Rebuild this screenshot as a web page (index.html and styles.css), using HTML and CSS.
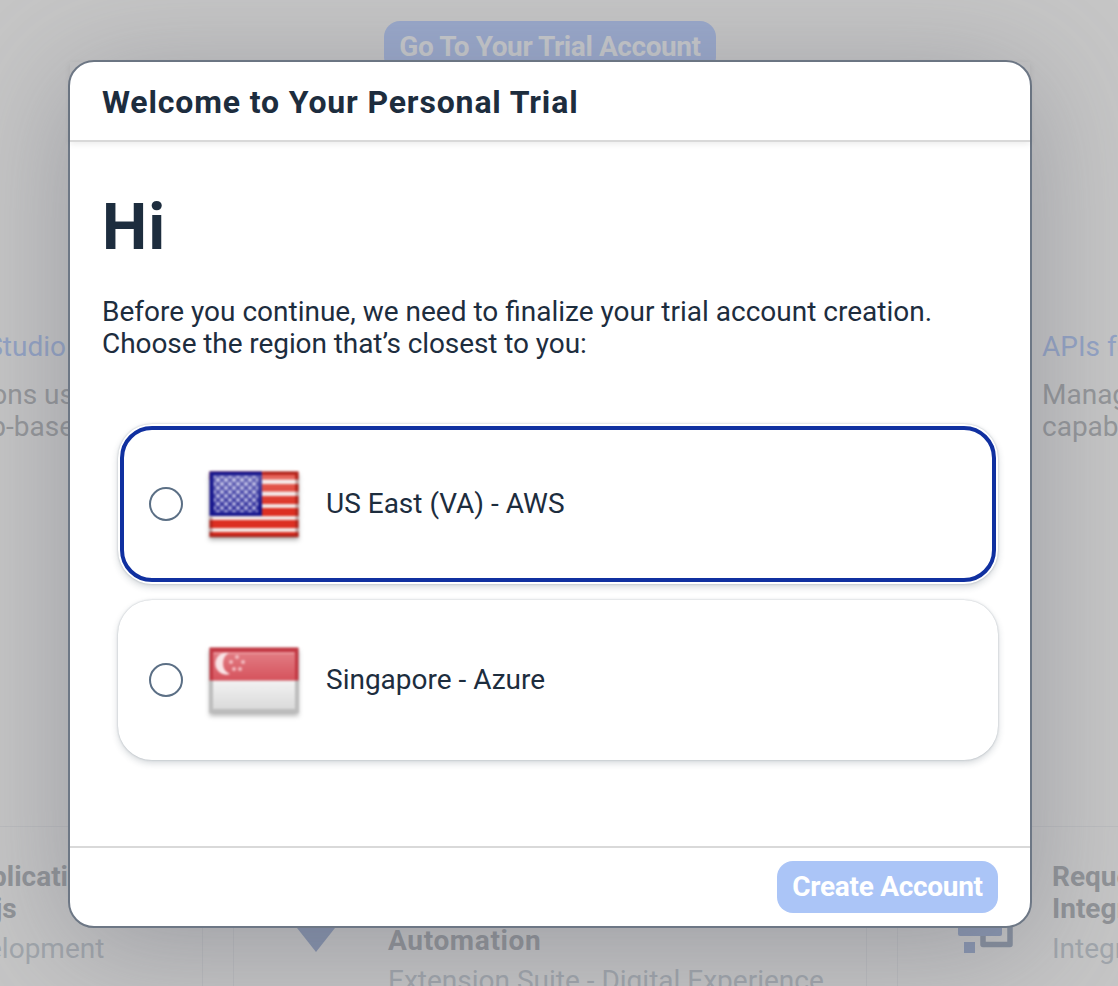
FILE: index.html
```html
<!DOCTYPE html>
<html lang="en">
<head>
<meta charset="utf-8">
<title>Welcome to Your Personal Trial</title>
<link rel="stylesheet" href="styles.css">
</head>
<body>
<main class="page">
  <div class="hero"><div class="hero-button"><span class="hero-label">Go To Your Trial Account</span></div></div>
  <div class="features">
    <section class="feature feature-left">
      <h3 class="feature-title">Studio</h3>
      <p class="feature-text"><span>ons us</span><br><span>b-base</span></p>
    </section>
    <section class="feature">
      <h3 class="feature-title">APIs for</h3>
      <p class="feature-text">Manage<br>capabilities</p>
    </section>
  </div>
  <div class="tiles">
    <article class="tile tile-left">
      <h4 class="tile-title"><span class="tile-app">plication</span><br><span class="tile-js">js</span></h4>
      <p class="tile-sub tile-dev">elopment</p>
    </article>
    <article class="tile tile-middle">
      <svg class="tile-icon" width="60" height="60" viewBox="0 0 60 60"><path d="M0 10H60L30 48Z" fill="#8592ad"/></svg>
      <div><h4 class="tile-title tile-auto">Automation</h4><p class="tile-sub">Extension Suite - Digital Experience</p></div>
    </article>
    <article class="tile tile-right">
      <svg class="tile-icon icon-links" width="56" height="60" viewBox="0 0 56 60"><path d="M25 30V43.500H52V14" fill="none" stroke="#858e9d" stroke-width="5.500" stroke-linejoin="round"/><rect x="0" y="4" width="44" height="31" rx="2" fill="#8996b1"/><rect x="6" y="41" width="11" height="11" fill="#8996b1"/></svg>
      <div><h4 class="tile-title">Request<br>Integration</h4><p class="tile-sub">Integration</p></div>
    </article>
  </div>
</main>

<div class="dialog" role="dialog">
  <header class="dialog-header"><h1 class="dialog-title">Welcome to Your Personal Trial</h1></header>
  <div class="dialog-body">
    <h2 class="greeting">Hi</h2>
    <p class="intro"><span class="intro-one">Before you continue, we need to finalize your trial account creation.</span><br><span class="intro-two">Choose the region that’s closest to you:</span></p>
    <div class="regions">
      <label class="region region-focus">
        <span class="radio"></span>
        <svg class="flag" width="98" height="80" viewBox="0 0 98 80">
          <defs>
            <pattern id="stars" width="8" height="8" patternUnits="userSpaceOnUse" x="7" y="10">
              <circle cx="2" cy="2" r="1.900" fill="#c2c1e6"/><circle cx="6" cy="6" r="1.900" fill="#c2c1e6"/>
            </pattern>
            <linearGradient id="shine" x1="0" y1="0" x2="0" y2="1">
              <stop offset="0" stop-color="#fff" stop-opacity=".28"/><stop offset="1" stop-color="#fff" stop-opacity="0"/>
            </linearGradient>
          </defs>
          <g class="soft">
            <rect x="4.500" y="7.500" width="89" height="65.500" fill="#f3e6e4"/>
            <path d="M4.500 7.500H93.500V15.500H4.500ZM5 20H93.500V27.500H5ZM5 32H93.500V40H5ZM5 44H93.500V52H5ZM4.500 56H93.500V64H4.500ZM4.500 68H93.500V73H4.500Z" fill="#dc2f22"/>
            <rect x="4.500" y="7.500" width="52.500" height="44.500" fill="#15158c"/>
            <rect x="9" y="12" width="44" height="37" fill="#3837a0"/>
            <rect x="9" y="12" width="44" height="36" fill="url(#stars)"/>
            <rect x="8" y="11" width="82" height="32" fill="url(#shine)"/>
            <path d="M58 9H92V72H6V53" fill="none" stroke="#5c1010" stroke-opacity=".35" stroke-width="3"/>
          </g>
        </svg>
        <span class="region-name">US East (VA) - AWS</span>
      </label>
      <label class="region">
        <span class="radio"></span>
        <svg class="flag" width="98" height="80" viewBox="0 0 98 80">
          <defs>
            <linearGradient id="red" x1="0" y1="0" x2="0" y2="1"><stop offset="0" stop-color="#e27d84"/><stop offset="1" stop-color="#d6535d"/></linearGradient>
            <linearGradient id="pale" x1="0" y1="0" x2="0" y2="1"><stop offset="0" stop-color="#f3f3f3"/><stop offset="1" stop-color="#dadada"/></linearGradient>
          </defs>
          <g class="soft">
            <rect x="4.500" y="8" width="89" height="65" fill="#bcbcbc"/>
            <rect x="8" y="40" width="82" height="29" fill="url(#pale)"/>
            <rect x="4.500" y="7.500" width="89" height="33" fill="#c23843"/>
            <rect x="8" y="12" width="82" height="28" fill="url(#red)"/>
            <rect x="9" y="12.500" width="80" height="1.500" fill="#ee9ca1"/>
            <path d="M24 13A11 11 0 1 0 25 34Q18 31 18 23.500Q18 16 24 13Z" fill="#f9e4e6"/>
            <g fill="#f4bfc3"><circle cx="32" cy="17" r="2"/><circle cx="26" cy="22" r="2"/><circle cx="38" cy="22" r="2"/><circle cx="29" cy="29" r="2"/><circle cx="35" cy="29" r="2"/></g>
          </g>
        </svg>
        <span class="region-name">Singapore - Azure</span>
      </label>
    </div>
  </div>
  <footer class="dialog-footer"><button class="create"><span class="create-label">Create Account</span></button></footer>
</div>
</body>
</html>
```

FILE: styles.css
```css
* { box-sizing: border-box; margin: 0; padding: 0; }
body { width: 1118px; height: 986px; overflow: hidden; position: relative; font-family: Roboto, "Liberation Sans", sans-serif; font-size: 28px; line-height: 32px; color: #1d2d3e; background: #c6c6c6; }
span { white-space: nowrap; }
.page { height: 986px; overflow: hidden; display: flex; flex-direction: column; }
.hero { height: 331px; padding-top: 21px; display: flex; justify-content: center; align-items: flex-start; }
.hero-button { width: 332px; height: 52px; margin-right: 18px; border-radius: 16px; background: #9aa9cc; color: #c8cacd; font-weight: 700; display: flex; align-items: center; justify-content: center; }
.hero-label { letter-spacing: -.42px; }
.features { height: 495px; display: flex; justify-content: space-between; color: #949699; }
.feature { width: 76px; white-space: nowrap; }
.feature-left { direction: rtl; width: 66px; }
.feature-left span { direction: ltr; unicode-bidi: isolate; }
.feature-title { font-size: 28px; font-weight: 400; color: #93a3c5; }
.feature-text { padding-top: 16px; }
.feature-left .feature-text { margin-right: -8px; }
.tiles { display: grid; grid-template-columns: 203px 634px 221px; column-gap: 30px; height: 160px; white-space: nowrap; }
.tile { border: 1px solid #bcbdbf; border-bottom: 0; display: flex; padding-top: 34px; }
.tile-left { display: block; border-left: 0; }
.tile-middle { padding: 64px 0 0 52px; gap: 42px; }
.tile-right { padding-left: 60px; gap: 38px; border-right: 0; }
.tile-title { font-size: 28px; font-weight: 700; color: #909397; }
.tile-sub { color: #a1a6ac; padding-top: 8px; }
.tile-auto { padding-top: 34px; letter-spacing: .65px; }
.tile-app { margin-left: -9px; }
.tile-js { margin-left: -5px; }
.tile-dev { margin-left: -13px; }
.tile-icon { flex-shrink: 0; }
.tile-middle .tile-icon { margin-top: 13px; }
.icon-links { margin-top: 40px; }

.dialog { position: absolute; left: 68px; top: 60px; width: 964px; height: 868px; border: 2px solid #6d7785; border-radius: 26px; background: #fff; display: flex; flex-direction: column; box-shadow: 0 20px 120px rgba(95, 98, 112, .42); }
.dialog-header { height: 80px; padding: 1px 32px 0; display: flex; align-items: center; border-bottom: 2px solid #d9d9d9; box-shadow: 0 2px 6px rgba(0, 0, 0, .08); }
.dialog-title { font-size: 32px; line-height: 40px; font-weight: 700; white-space: nowrap; letter-spacing: .85px; }
.dialog-body { flex: 1; padding: 48px 32px 0; }
.greeting { font-size: 64px; line-height: 76px; font-weight: 700; letter-spacing: 1px; }
.intro { padding-top: 30px; }
.intro-two { letter-spacing: -.08px; }
.regions { display: flex; flex-direction: column; gap: 16px; padding: 64px 0 0 16px; }
.region { width: 880px; height: 160px; border-radius: 34px; display: flex; align-items: center; padding-left: 31px; background: #fff; box-shadow: 0 0 2px rgba(34, 53, 72, .3), 0 3px 7px rgba(34, 53, 72, .2); }
.region-focus { outline: 4px solid #1030a0; outline-offset: -6px; }
.radio { width: 34px; height: 34px; border: 2px solid #5b6f85; border-radius: 50%; }
.flag { margin: 0 23px 0 22px; filter: drop-shadow(0 3px 2px rgba(0, 0, 0, .28)); }
.soft { filter: blur(.9px); }
.dialog-footer { height: 80px; border-top: 2px solid #d9d9d9; padding: 13px 32px; display: flex; justify-content: flex-end; }
.create { width: 221px; height: 52px; border: 0; border-radius: 16px; background: #abc5f7; color: #fff; font: 700 28px/32px Roboto, "Liberation Sans", sans-serif; }
.create-label { letter-spacing: -.3px; }
```
